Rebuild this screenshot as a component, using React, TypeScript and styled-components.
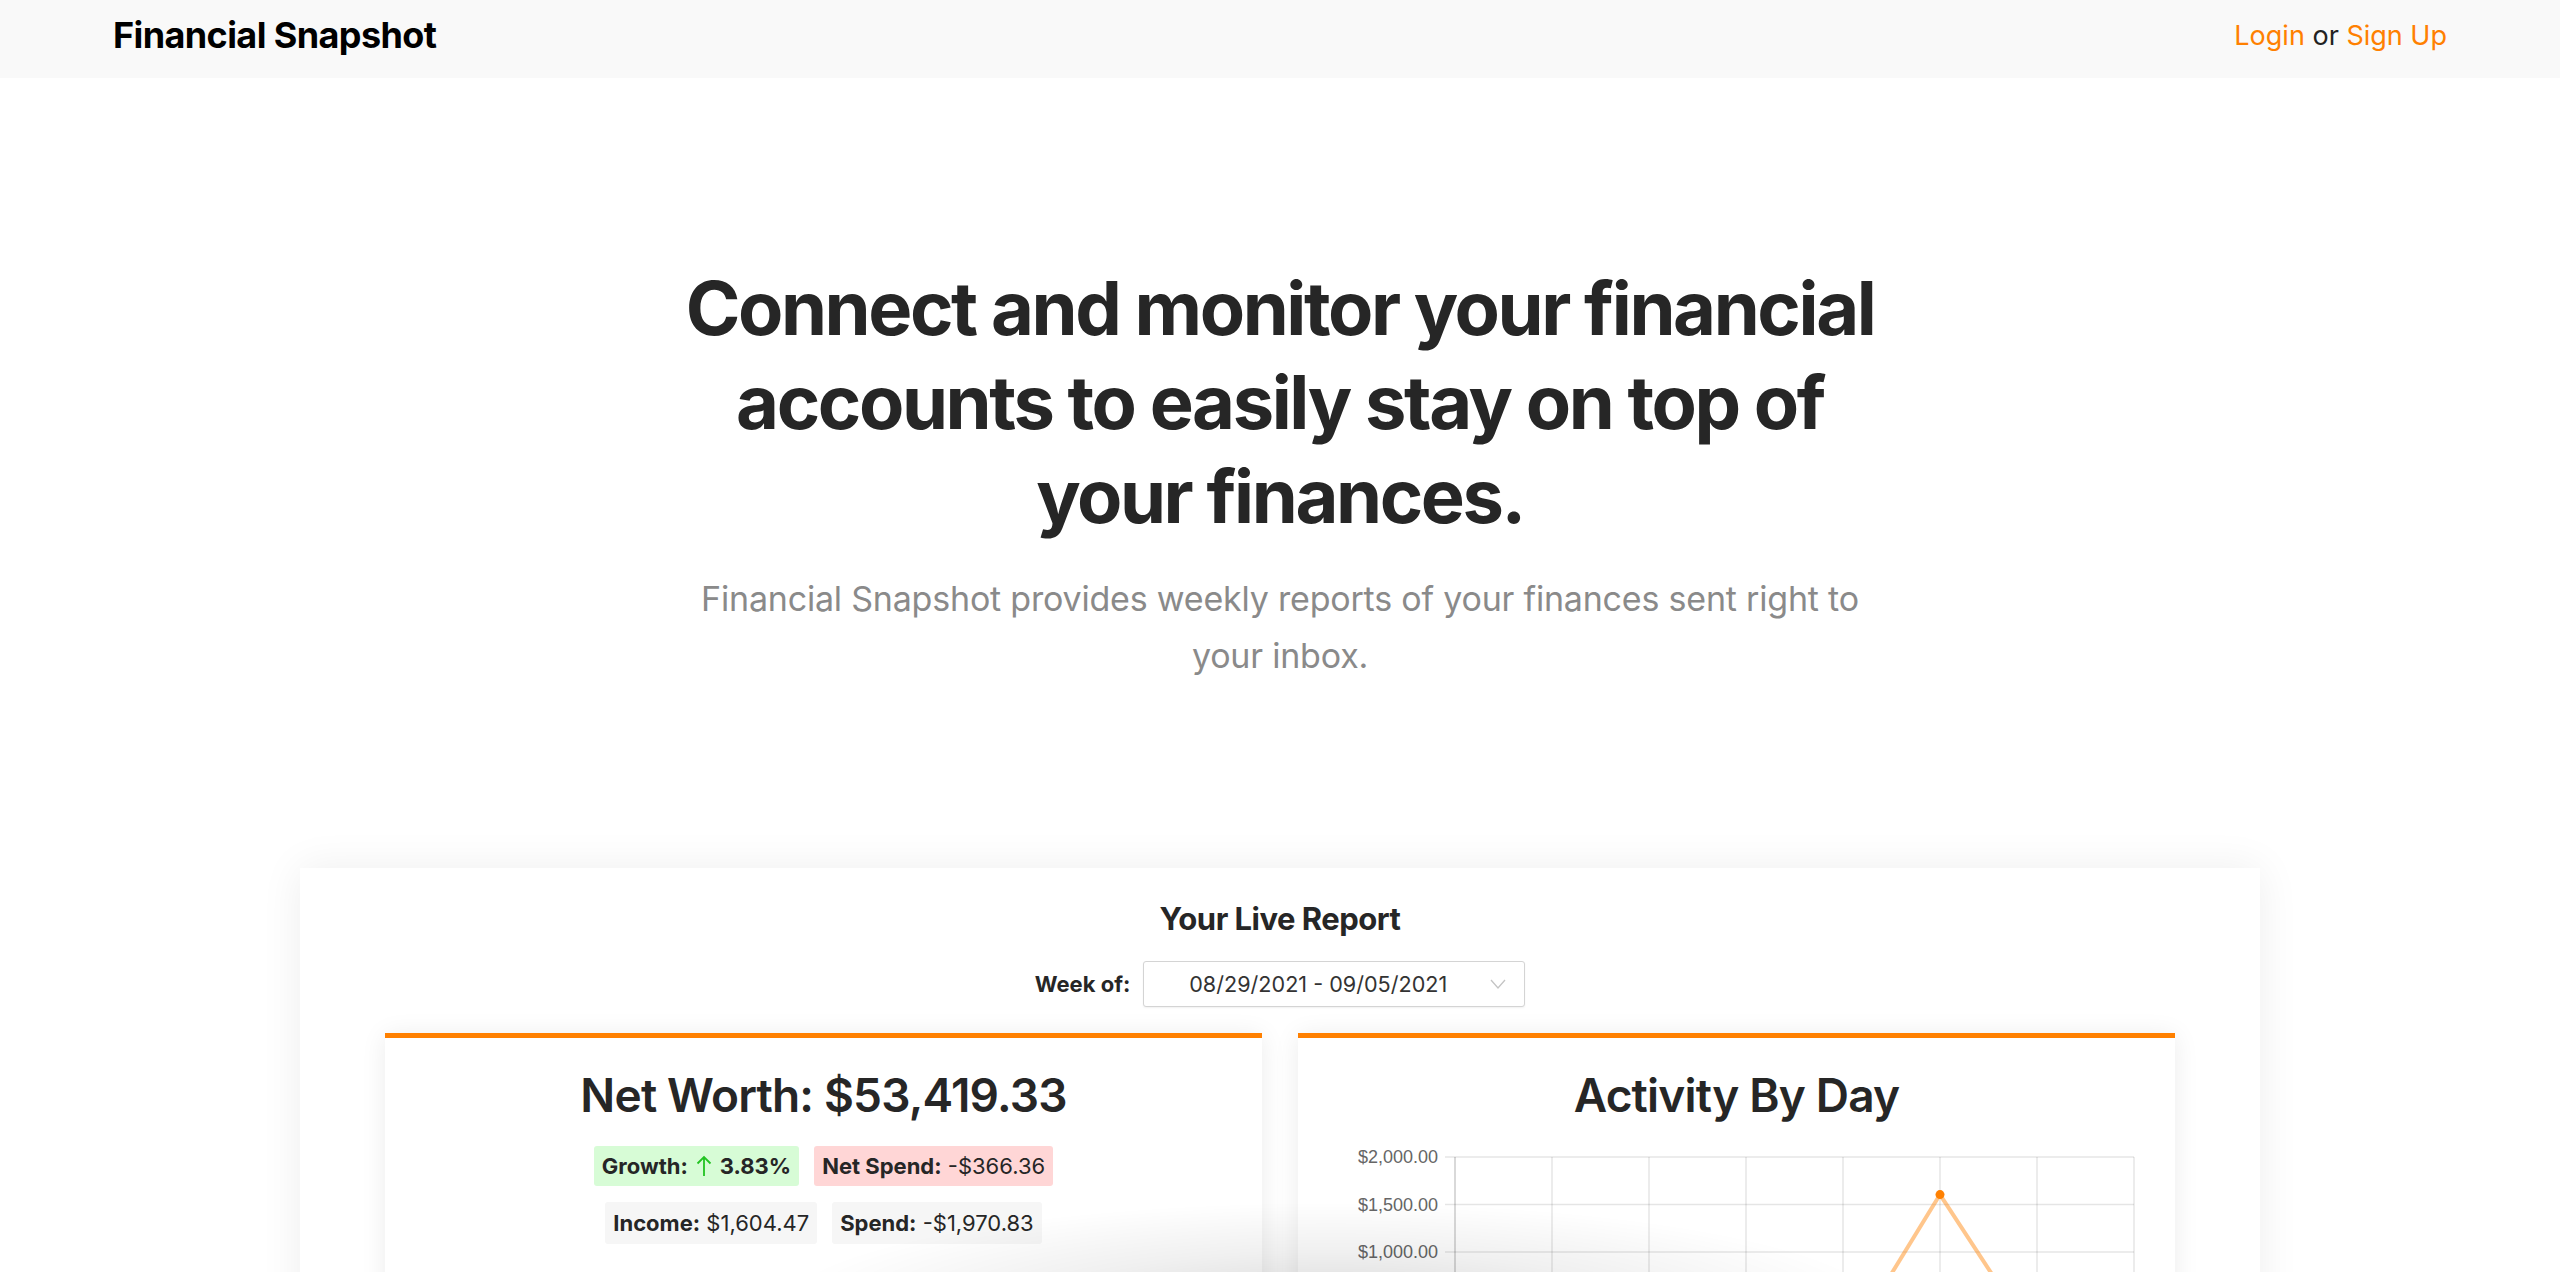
import React from "react";
import styled, { createGlobalStyle } from "styled-components";

const GlobalStyle = createGlobalStyle`
  html, body { margin: 0; padding: 0; background: #ffffff; }
  body {
    font-family: Inter, "Noto Sans", "Liberation Sans", sans-serif;
    color: #262626;
    -webkit-font-smoothing: antialiased;
  }
  * { box-sizing: border-box; }
`;

const ORANGE = "#ff8000";

const Page = styled.div`
  min-height: 100vh;
  overflow: hidden;
`;

const Header = styled.header`
  height: 78px;
  background: #f9f9f9;
  padding: 0 113px 8px;
  display: flex;
  align-items: center;
  justify-content: space-between;
`;

const Brand = styled.div`
  font-size: 36px;
  font-weight: 700;
  color: #000;
  letter-spacing: -0.6px;
`;

const Nav = styled.nav`
  font-size: 27px;
  color: #222;
`;

const NavLink = styled.a`
  color: ${ORANGE};
  text-decoration: none;
`;

const Hero = styled.section`
  padding-top: 183px;
  display: flex;
  flex-direction: column;
  align-items: center;
  text-align: center;
`;

const Headline = styled.h1`
  margin: 0;
  font-size: 74px;
  line-height: 94px;
  font-weight: 700;
  letter-spacing: -2.4px;
  color: #262626;
`;

const Lead = styled.p`
  margin: 27px 0 0;
  font-size: 34px;
  line-height: 57px;
  color: #8a8a8a;
  font-weight: 400;
  letter-spacing: -0.2px;
`;

const Report = styled.section`
  width: 1960px;
  margin: 184px auto 0;
  background: #fff;
  box-shadow: 0 0 40px rgba(0, 0, 0, 0.07);
  padding: 32px 85px 80px;
  display: flex;
  flex-direction: column;
  align-items: center;
`;

const ReportTitle = styled.h2`
  margin: 0;
  font-size: 31px;
  line-height: 37px;
  font-weight: 700;
  letter-spacing: -0.5px;
  color: #262626;
`;

const WeekRow = styled.div`
  margin-top: 24px;
  display: flex;
  align-items: center;
  gap: 13px;
`;

const WeekLabel = styled.label`
  font-size: 22px;
  font-weight: 700;
  color: #262626;
`;

const Select = styled.div`
  width: 382px;
  height: 46px;
  border: 1px solid #d4d4d4;
  border-radius: 3px;
  background: #fff;
  box-shadow: 0 1px 2px rgba(0, 0, 0, 0.06);
  display: flex;
  align-items: center;
  padding: 0 18px 0 45px;
  font-size: 21.6px;
  color: #333;
`;

const SelectValue = styled.span`
  flex: 1;
`;

const Panels = styled.div`
  margin-top: 26px;
  width: 100%;
  display: grid;
  grid-template-columns: 1fr 1fr;
  gap: 36px;
`;

const Panel = styled.div`
  background: #fff;
  border-top: 5px solid ${ORANGE};
  box-shadow: 0 2px 24px rgba(0, 0, 0, 0.08);
  padding-top: 29px;
  min-height: 520px;
  display: flex;
  flex-direction: column;
  align-items: center;
`;

const PanelTitle = styled.h3`
  margin: 0;
  font-size: 46px;
  line-height: 56px;
  font-weight: 600;
  letter-spacing: -0.8px;
  color: #262626;
`;

const BadgeRows = styled.div`
  margin-top: 23px;
  display: flex;
  flex-direction: column;
  align-items: center;
  gap: 16px;
`;

const BadgeRow = styled.div`
  display: flex;
  gap: 15px;
`;

const Badge = styled.div<{ $tone: "green" | "red" | "grey" }>`
  display: flex;
  align-items: center;
  gap: 8px;
  padding: ${(p) => (p.$tone === "grey" ? "8px" : "7px")} 8px;
  border-radius: 3px;
  font-size: 22px;
  line-height: 26px;
  color: #262626;
  background: ${(p) =>
    p.$tone === "green" ? "#d7fcd6" : p.$tone === "red" ? "#ffd6d6" : "#f6f6f6"};
`;

const Strong = styled.b`
  font-weight: 700;
`;

const Arrow = styled.span`
  display: inline-flex;
  color: #22c322;
`;

const ChartSvg = styled.svg`
  display: block;
  align-self: stretch;
  width: 100%;
  height: 340px;
`;

const BottomShade = styled.div`
  position: fixed;
  left: 0;
  right: 0;
  bottom: 0;
  height: 160px;
  pointer-events: none;
  background: radial-gradient(
    ellipse 560px 110px at 52% 125%,
    rgba(0, 0, 0, 0.16) 0%,
    rgba(0, 0, 0, 0.06) 55%,
    rgba(0, 0, 0, 0) 100%
  );
`;

const yLabels = ["$2,000.00", "$1,500.00", "$1,000.00"];
const values = [0, 0, 0, 0, -60, 1604.47, 40, 0];

function Chart() {
  const top = 34;
  const step = 47.5;
  const left = 157;
  const right = 836;
  const colW = (right - left) / 7;
  const yOf = (v: number) => top + ((2000 - v) / 500) * step;
  const bottom = top + step * 5;
  const pts = values.map((v, i) => [left + colW * i, yOf(v)]);
  const rows = [0, 1, 2, 3, 4, 5];
  return (
    <ChartSvg viewBox="0 0 877 340" preserveAspectRatio="xMinYMin meet">
      {rows.map((i) => (
        <line
          key={"h" + i}
          x1={left - 10}
          x2={right}
          y1={top + step * i}
          y2={top + step * i}
          stroke="rgba(0,0,0,0.1)"
          strokeWidth={1.5}
        />
      ))}
      {yLabels.map((l, i) => (
        <text
          key={l}
          x={140}
          y={top + step * i + 6}
          textAnchor="end"
          fontFamily="'Liberation Sans', Arial, sans-serif"
          fontSize={18}
          fill="#666"
        >
          {l}
        </text>
      ))}
      {Array.from({ length: 8 }).map((_, i) => (
        <line
          key={i}
          x1={left + colW * i}
          x2={left + colW * i}
          y1={top}
          y2={bottom + 10}
          stroke={i === 0 ? "rgba(0,0,0,0.2)" : "rgba(0,0,0,0.1)"}
          strokeWidth={1.5}
        />
      ))}
      <polyline
        points={pts.map((p) => p.join(",")).join(" ")}
        fill="none"
        stroke="rgba(255,128,0,0.45)"
        strokeWidth={4}
        strokeLinejoin="round"
      />
      {pts.map((p, i) => (
        <circle key={i} cx={p[0]} cy={p[1]} r={4.5} fill={ORANGE} />
      ))}
    </ChartSvg>
  );
}

export default function App() {
  return (
    <Page>
      <GlobalStyle />
      <Header>
        <Brand>Financial Snapshot</Brand>
        <Nav>
          <NavLink href="#">Login</NavLink> or <NavLink href="#">Sign Up</NavLink>
        </Nav>
      </Header>
      <Hero>
        <Headline>
          Connect and monitor your financial
          <br />
          accounts to easily stay on top of
          <br />
          your finances.
        </Headline>
        <Lead>
          Financial Snapshot provides weekly reports of your finances sent right to
          <br />
          your inbox.
        </Lead>
      </Hero>
      <Report>
        <ReportTitle>Your Live Report</ReportTitle>
        <WeekRow>
          <WeekLabel>Week of:</WeekLabel>
          <Select>
            <SelectValue>08/29/2021 - 09/05/2021</SelectValue>
            <svg width="16" height="12" viewBox="0 0 16 12" fill="none">
              <path d="M1 2l7 8 7-8" stroke="#c4c4c4" strokeWidth="1.3" />
            </svg>
          </Select>
        </WeekRow>
        <Panels>
          <Panel>
            <PanelTitle>Net Worth: $53,419.33</PanelTitle>
            <BadgeRows>
              <BadgeRow>
                <Badge $tone="green">
                  <Strong>Growth:</Strong>
                  <Arrow>
                    <svg width="16" height="22" viewBox="0 0 16 22" fill="none">
                      <path d="M8 21V2M1.5 8.5L8 2l6.5 6.5" stroke="currentColor" strokeWidth="1.8" />
                    </svg>
                  </Arrow>
                  <Strong>3.83%</Strong>
                </Badge>
                <Badge $tone="red">
                  <span>
                    <Strong>Net Spend:</Strong> -$366.36
                  </span>
                </Badge>
              </BadgeRow>
              <BadgeRow>
                <Badge $tone="grey">
                  <span>
                    <Strong>Income:</Strong> $1,604.47
                  </span>
                </Badge>
                <Badge $tone="grey">
                  <span>
                    <Strong>Spend:</Strong> -$1,970.83
                  </span>
                </Badge>
              </BadgeRow>
            </BadgeRows>
          </Panel>
          <Panel>
            <PanelTitle>Activity By Day</PanelTitle>
            <Chart />
          </Panel>
        </Panels>
      </Report>
      <BottomShade />
    </Page>
  );
}
